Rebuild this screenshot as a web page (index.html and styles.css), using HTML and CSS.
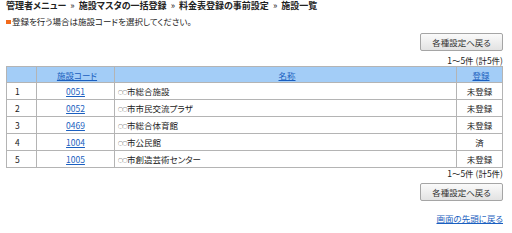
FILE: index.html
```html
<!DOCTYPE html>
<html lang="ja">
<head>
  <meta charset="UTF-8">
  <title>施設一覧</title>

  <link rel="stylesheet" href="styles.css">
</head>
<body>
  <div id="container-page">
    <div id="breadcrumb">
      <span>管理者メニュー</span>
      <span class="sep">&raquo;</span>
      <span>施設マスタの一括登録</span>
      <span class="sep">&raquo;</span>
      <span>料金表登録の事前設定</span>
      <span class="sep">&raquo;</span>
      <span>施設一覧</span>
    </div>

    <p class="notice"><span class="mark"></span>登録を行う場合は施設コードを選択してください。</p>

    <div class="button-row top">
      <a class="btn">各種設定へ戻る</a>
    </div>

    <div class="count">1～5件 (計5件)</div>
    <table class="list">
      <tr>
        <th class="col-no"></th>
        <th class="col-code"><a>施設コード</a></th>
        <th class="col-name"><a>名称</a></th>
        <th class="col-state"><a>登録</a></th>
      </tr>
      <tr>
        <td>1</td>
        <td class="center"><a>0051</a></td>
        <td><span class="maru">○○</span>市総合施設</td>
        <td class="center">未登録</td>
      </tr>
      <tr>
        <td>2</td>
        <td class="center"><a>0052</a></td>
        <td><span class="maru">○○</span>市市民交流プラザ</td>
        <td class="center">未登録</td>
      </tr>
      <tr>
        <td>3</td>
        <td class="center"><a>0469</a></td>
        <td><span class="maru">○○</span>市総合体育館</td>
        <td class="center">未登録</td>
      </tr>
      <tr>
        <td>4</td>
        <td class="center"><a>1004</a></td>
        <td><span class="maru">○○</span>市公民館</td>
        <td class="center">済</td>
      </tr>
      <tr>
        <td>5</td>
        <td class="center"><a>1005</a></td>
        <td><span class="maru">○○</span>市創造芸術センター</td>
        <td class="center">未登録</td>
      </tr>
    </table>
    <div class="count below">1～5件 (計5件)</div>

    <div class="button-row bottom">
      <a class="btn">各種設定へ戻る</a>
    </div>

    <div class="page-top">
      <a>画面の先頭に戻る</a>
    </div>
  </div>
</body>
</html>
```

FILE: styles.css
```css
body {
  background-color: #fff;
  color: #222;
  font-family: "Noto Sans CJK JP", "Noto Sans", sans-serif;
  font-feature-settings: "palt";
  font-size: 8.5px;
  margin: 0;
}

a {
  color: #1a5fc0;
  cursor: pointer;
  text-decoration: underline;
}

#container-page {
  padding: 0 9px 0 6px;
}

#breadcrumb {
  font-size: 9px;
  font-weight: bold;
  line-height: 12px;
}

#breadcrumb .sep {
  font-weight: normal;
  margin: 0 2px;
}

.notice {
  line-height: 12px;
  margin: 3px 0 0 0;
}

.mark {
  background-color: #f26a1b;
  display: inline-block;
  height: 4px;
  margin-right: 1px;
  vertical-align: 1px;
  width: 5px;
}

.button-row {
  display: flex;
  justify-content: flex-end;
}

.button-row.top {
  margin-top: 6px;
}

.button-row.bottom {
  margin-top: 5px;
}

.btn {
  background: linear-gradient(#fafafa, #e2e2e2);
  border: 1px solid #a5a5a5;
  border-radius: 2px;
  color: #333;
  display: block;
  height: 16px;
  line-height: 16px;
  text-align: center;
  text-decoration: none;
  width: 81px;
}

.count {
  line-height: 10px;
  margin-top: 4px;
  text-align: right;
}

.count.below {
  margin-top: 0;
}

.list {
  border: 1px solid #9a9a9a;
  border-collapse: collapse;
  margin-top: 1px;
  width: 100%;
}

.list th,
.list td {
  border: 1px solid #b4b4b4;
  height: 16px;
  line-height: 10px;
  padding: 0 0 0 3px;
}

.list th {
  background-color: #a3cdf7;
  font-weight: normal;
  height: 15px;
  text-align: center;
}

.list td:first-child {
  padding-left: 8px;
}

.list .center {
  padding: 0;
  text-align: center;
}

.maru {
  font-size: 5px;
  letter-spacing: -0.5px;
  vertical-align: 1px;
}

.col-no {
  width: 26px;
}

.col-code {
  width: 74px;
}

.col-state {
  width: 42px;
}

.page-top {
  margin-top: 11px;
  text-align: right;
}
```
